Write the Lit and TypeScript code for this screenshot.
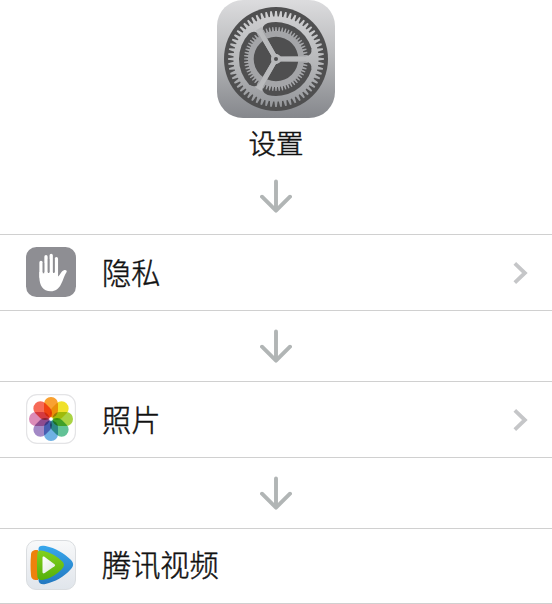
import { LitElement, html, css, svg, nothing } from "lit";
import { customElement, property } from "lit/decorators.js";

const point = (r: number, deg: number) => {
  const a = (deg * Math.PI) / 180;
  return `${(r * Math.cos(a)).toFixed(2)} ${(r * Math.sin(a)).toFixed(2)}`;
};

function cog(root: number, tip: number, hole: number, count: number): string {
  const step = 360 / count;
  let d = "";
  for (let i = 0; i < count; i++) {
    const a = i * step;
    d += `${i ? "L" : "M"}${point(root, a - step * 0.36)}L${point(tip, a - step * 0.17)}`;
    d += `L${point(tip, a + step * 0.17)}L${point(root, a + step * 0.36)}`;
  }
  return `${d}Z M${hole} 0A${hole} ${hole} 0 1 0 ${-hole} 0A${hole} ${hole} 0 1 0 ${hole} 0Z`;
}

// One opening between two spokes, with rounded outer corners.
const inRotated = (x: number, y: number, deg: number) => {
  const a = (deg * Math.PI) / 180;
  return `${(x * Math.cos(a) - y * Math.sin(a)).toFixed(2)} ${(x * Math.sin(a) + y * Math.cos(a)).toFixed(2)}`;
};
const opening =
  `M${inRotated(5, 2.3, 0)}L${inRotated(29, 2.6, 0)}Q${inRotated(36.5, 3, 0)} ${point(37, 17)}` +
  `A37 37 0 0 1 ${point(37, 103)}Q${inRotated(36.5, -3, 120)} ${inRotated(29, -2.6, 120)}L${inRotated(5, -2.3, 120)}Z`;

@customElement("settings-icon")
class SettingsIcon extends LitElement {
  static styles = css`
    :host { display: block; width: 118px; height: 118px; }
    svg { display: block; }
  `;
  render() {
    return html`<svg width="118" height="118" viewBox="-59 -59 118 118">
      <defs>
        <linearGradient id="plate" x1="0" y1="0" x2="0" y2="1">
          <stop offset="0" stop-color="#dcdcde" /><stop offset=".45" stop-color="#b9babc" /><stop offset="1" stop-color="#85878c" />
        </linearGradient>
        <linearGradient id="metal" gradientUnits="userSpaceOnUse" x1="0" y1="-48" x2="0" y2="48">
          <stop offset="0" stop-color="#d0d0d2" /><stop offset=".5" stop-color="#b9babc" /><stop offset="1" stop-color="#95979b" />
        </linearGradient>
      </defs>
      <rect x="-59" y="-59" width="118" height="118" rx="26" fill="url(#plate)" />
      <circle r="52" fill="#4f4f50" />
      <path d=${cog(42.5, 48, 36.8, 60)} fill="url(#metal)" fill-rule="evenodd" />
      <circle r="37.5" fill="url(#metal)" />
      ${[0, 120, 240].map((a) => svg`<path d=${opening} transform="rotate(${a})" fill="#4f4f50" />`)}
      <path d=${cog(28, 32, 22.3, 60)} fill="#a4a5a8" fill-rule="evenodd" />
      ${[0, 120, 240].map((a) => svg`<path d="M0 -2.4H29L35 -3.5V3.5L29 2.4H0Z" transform="rotate(${a})" fill="url(#metal)" />`)}
      <circle r="5" fill="#b7b8ba" />
      <circle r="2" fill="#4f4f50" />
    </svg>`;
  }
}

@customElement("down-arrow")
class DownArrow extends LitElement {
  static styles = css`
    :host { display: flex; justify-content: center; }
  `;
  render() {
    return html`<svg width="34" height="34" viewBox="0 0 34 34" fill="none" stroke="#b1b5b5" stroke-width="3.9" stroke-linecap="round" stroke-linejoin="round">
      <path d="M17 2.5V31M3 17.7L17 31.7L31 17.7" />
    </svg>`;
  }
}

const privacyIcon = html`<svg width="50" height="50" viewBox="0 0 50 50">
  <rect width="50" height="50" rx="10.5" fill="#8e8e93" />
  <g fill="none" stroke="#fff" stroke-width="3.3" stroke-linecap="round">
    <path d="M15 15.5V30M20 9.7V28M25.2 8.5V28M30.4 11.7V30" />
  </g>
  <path d="M13.35 25H32V29.5C34 28.5 34.8 24.3 38 23.2C39.6 22.6 41.3 23.4 40.6 25C38.5 27.7 37.3 33 35 37.2C32.6 42 29.5 44.2 24.8 44.2C17 44.2 13.35 38.5 13.35 30Z" fill="#fff" />
  <path d="M17.5 16V26.3M22.6 12V26M27.8 12V26" stroke="#8e8e93" stroke-width="1.5" />
</svg>`;

const petals = ["#f9a131", "#f0e12a", "#a9d343", "#62c296", "#6fb1e4", "#a389c6", "#dc8cb8", "#f66a58"];
const photosIcon = html`<svg width="50" height="50" viewBox="0 0 50 50">
  <rect x=".6" y=".6" width="48.8" height="48.8" rx="10.5" fill="#fff" stroke="#e4e4e6" stroke-width="1.2" />
  <g transform="translate(25 25)">
    ${petals.map((c, i) => svg`<rect class="petal" x="-7" y="-22" width="14" height="20.5" rx="6.9" fill=${c} transform="rotate(${i * 45})" />`)}
    <circle r="1.6" fill="#fff" />
  </g>
</svg>`;

const videoIcon = html`<svg width="50" height="50" viewBox="0 0 50 50">
  <defs>
    <linearGradient id="tile" x1="0" y1="0" x2="0" y2="1"><stop offset="0" stop-color="#f8f9fa" /><stop offset="1" stop-color="#e0e5eb" /></linearGradient>
    <linearGradient id="blue" x1="0" y1="0" x2="0" y2="1"><stop offset="0" stop-color="#38a7ec" /><stop offset="1" stop-color="#2378c0" /></linearGradient>
    <linearGradient id="green" x1="0" y1="0" x2="0" y2="1"><stop offset="0" stop-color="#83d01d" /><stop offset="1" stop-color="#55b00b" /></linearGradient>
    <linearGradient id="shine" x1="0" y1="0" x2="1" y2="1"><stop offset="0" stop-color="#fff" /><stop offset="1" stop-color="#dfe9dd" /></linearGradient>
  </defs>
  <rect x=".5" y=".5" width="49" height="49" rx="9.5" fill="url(#tile)" stroke="#dadde0" />
  <path d="M12.5 9C12.5 5.7 15.5 5.2 19.5 6C29.5 8.2 38 13 44.5 19.5C48 23 48 26 44.5 29.5C38 37 29 41.7 19.5 44C15.5 44.8 12.5 43.5 12.5 40Z" fill="url(#blue)" />
  <path d="M5 15C5 11 8 9.6 12 10.2V40C8 40.5 5 39 5 35C4.4 28.5 4.4 21.5 5 15Z" fill="#ee810c" />
  <path d="M11.3 14C11.3 10.5 14 9.9 18 11C25.5 13 31 16.5 35.8 21C38.7 24 38.6 26.2 35.8 29.2C31 34.4 25 38 17.5 39.8C13.7 40.5 11.3 39.5 11.3 36C10.8 29 10.8 21 11.3 14Z" fill="url(#green)" />
  <path d="M16.5 18C16.5 16.6 17.4 16.2 18.7 17L28.5 24.3C29.3 25 29.3 25.6 28.5 26.3L18.7 33C17.4 33.8 16.5 33.3 16.5 32Z" fill="url(#shine)" />
</svg>`;

@customElement("setting-row")
class SettingRow extends LitElement {
  @property() label = "";
  @property({ attribute: false }) icon: unknown = nothing;
  @property({ type: Boolean }) chevron = false;
  static styles = css`
    :host {
      display: flex; align-items: center; box-sizing: border-box; height: 77px;
      padding: 0 24px 1px 26px; border: solid #d0d0d0; border-width: 1px 0;
    }
    .icon { width: 50px; height: 50px; flex: none; }
    .icon svg { display: block; isolation: isolate; }
    .petal { mix-blend-mode: multiply; }
    .label {
      flex: 1; margin-left: 26px; padding-bottom: var(--label-lift, 2px); font-size: 29.2px; line-height: 40px;
      font-weight: 300; -webkit-text-stroke: 0.45px currentColor;
    }
    .chevron { display: block; margin-top: 2px; }
  `;
  render() {
    return html`<div class="icon">${this.icon}</div>
      <div class="label">${this.label}</div>
      ${this.chevron
        ? html`<svg class="chevron" width="15" height="22" viewBox="0 0 15 22" fill="none" stroke="#c5c6c8" stroke-width="3.8"><path d="M1.8 1.4L11.9 11L1.8 20.6" /></svg>`
        : nothing}`;
  }
}

@customElement("app-root")
class AppRoot extends LitElement {
  static styles = css`
    :host {
      display: block; width: 552px; height: 604px; overflow: hidden; background: #fff; color: #111;
      font-family: "Noto Sans CJK SC", sans-serif;
    }
    .app { display: flex; flex-direction: column; align-items: center; height: 234px; }
    .name { margin-top: 4px; font-size: 27.5px; line-height: 40px; font-weight: 300; -webkit-text-stroke: 0.5px currentColor; }
    .app down-arrow { margin-top: 17px; }
    .step { display: flex; align-items: center; justify-content: center; height: 70px; }
    .last { height: 76px; padding-bottom: 2px; --label-lift: 5px; }
  `;
  render() {
    return html`
      <div class="app"><settings-icon></settings-icon><div class="name">设置</div><down-arrow></down-arrow></div>
      <setting-row label="隐私" .icon=${privacyIcon} chevron></setting-row>
      <div class="step"><down-arrow></down-arrow></div>
      <setting-row label="照片" .icon=${photosIcon} chevron></setting-row>
      <div class="step"><down-arrow></down-arrow></div>
      <setting-row class="last" label="腾讯视频" .icon=${videoIcon}></setting-row>
    `;
  }
}
